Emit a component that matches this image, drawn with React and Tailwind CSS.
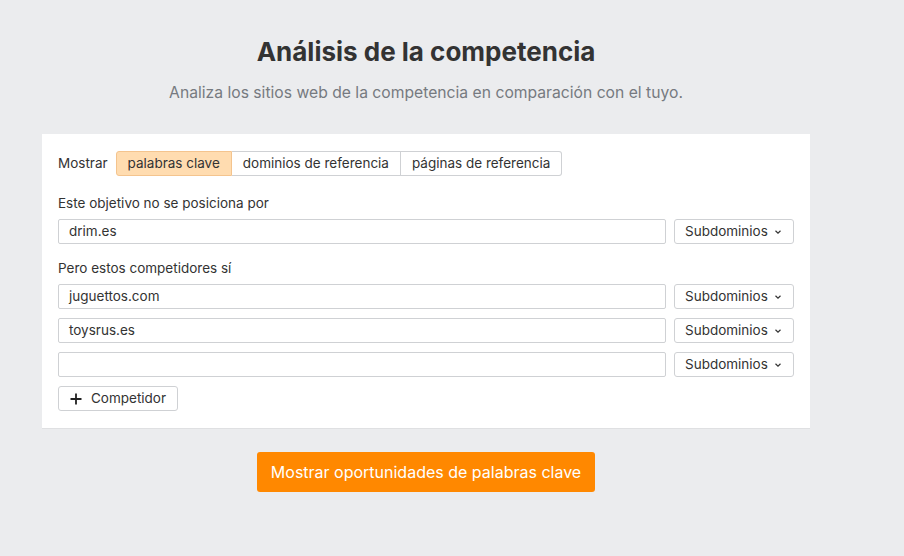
import React from "react";

function Sub() {
  return (
    <button className="h-[25px] w-[120px] shrink-0 rounded-[3px] border border-[#cfd1d4] bg-white pl-[10px] pr-[11px] flex items-center justify-between text-[13.5px] text-[#333]">
      <span>Subdominios</span>
      <svg width="8" height="6" viewBox="0 0 8 6"><path d="M1.5 1.8 L4 4.2 L6.5 1.8" fill="none" stroke="#333" strokeWidth="1.2" /></svg>
    </button>
  );
}

function Row({ value }) {
  return (
    <div className="flex gap-[8px]">
      <div className="h-[25px] flex-1 rounded-[2px] border border-[#cfd1d4] bg-white px-[10px] flex items-center text-[13.5px] text-[#333]">{value}</div>
      <Sub />
    </div>
  );
}

export default function App() {
  return (
    <div className="min-h-[556px] w-full bg-[#ebecee] text-[#333]" style={{ fontFamily: "Inter, 'Noto Sans', sans-serif" }}>
      <div className="ml-[42px] w-[768px] pt-[36px] flex flex-col items-center">
        <h1 className="text-[26px] font-bold leading-[32px] text-[#333]">Análisis de la competencia</h1>
        <p className="mt-[15px] text-[15.7px] leading-[20px] text-[#767a80]">Analiza los sitios web de la competencia en comparación con el tuyo.</p>
        <div className="mt-[31px] w-full bg-white border-b border-[#dfe0e2] px-[16px] pt-[17px] pb-[17px]">
          <div className="flex items-center text-[13.5px]">
            <span className="mr-[8px]">Mostrar</span>
            <div className="flex h-[25px]">
              <div className="px-[11px] flex items-center bg-[#ffdcb0] border border-[#f4c48e] rounded-l-[3px]">palabras clave</div>
              <div className="px-[11px] flex items-center border-y border-r border-[#cfd1d4]">dominios de referencia</div>
              <div className="px-[11px] flex items-center border-y border-r border-[#cfd1d4] rounded-r-[3px]">páginas de referencia</div>
            </div>
          </div>
          <div className="mt-[19px] text-[13.5px] leading-[17px]">Este objetivo no se posiciona por</div>
          <div className="mt-[7px]"><Row value="drim.es" /></div>
          <div className="mt-[16px] text-[13.5px] leading-[17px]">Pero estos competidores sí</div>
          <div className="mt-[7px] flex flex-col gap-[9px]">
            <Row value="juguettos.com" />
            <Row value="toysrus.es" />
            <Row value="" />
          </div>
          <button className="mt-[9px] h-[25px] w-[120px] rounded-[3px] border border-[#cfd1d4] bg-white flex items-center pl-[10px] text-[13.5px] text-[#333]">
            <svg width="14" height="14" viewBox="0 0 14 14" className="mr-[8px]"><path d="M7 1.5V12.5M1.5 7H12.5" stroke="#222" strokeWidth="1.8" /></svg>
            Competidor
          </button>
        </div>
        <button className="mt-[23px] h-[40px] w-[338px] rounded-[3px] bg-[#ff8800] text-white text-[16px]">Mostrar oportunidades de palabras clave</button>
      </div>
    </div>
  );
}
